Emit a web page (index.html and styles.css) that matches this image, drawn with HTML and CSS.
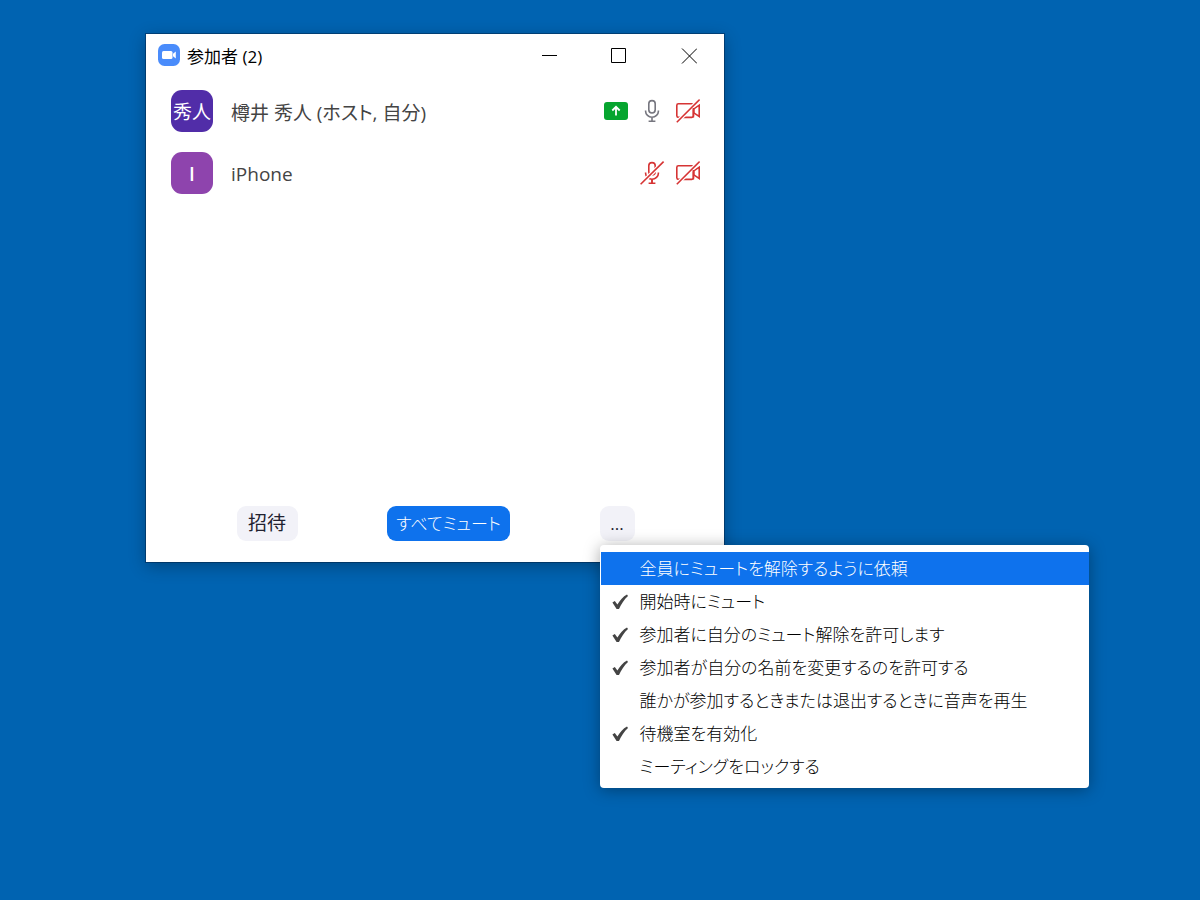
FILE: index.html
```html
<!DOCTYPE html>
<html lang="ja">
<head>
    <meta charset="UTF-8">
    <meta name="viewport" content="width=device-width, initial-scale=1.0">
    <title>参加者 (2)</title>
    <link rel="stylesheet" href="styles.css">
</head>
<body>
    <svg class="symbols" aria-hidden="true">
        <symbol id="mic" viewBox="0 0 24 24">
            <rect x="8.8" y="1.6" width="6.4" height="12.4" rx="3.2"/>
            <path d="M5.6 11.5v.7a6.4 6 0 0 0 12.8 0v-.7M12 18.2v4M8.6 22.3h6.8"/>
        </symbol>
        <symbol id="video-off" viewBox="0 0 24 24">
            <rect x=".8" y="4.8" width="16.6" height="13.6" rx="1.6"/>
            <path d="M17.8 9.8l5.4-3.6v11.2l-5.4-3.6z"/>
            <path class="slash-gap" d="M1 23L23.4 .8"/>
            <path d="M17.4 9v9.4"/>
            <path d="M.8 23.2L23.6 .6"/>
        </symbol>
        <symbol id="check" viewBox="0 0 18 18">
            <path d="M1.4 9.5L3.8 8l2.6 3.5C9 7.5 12 3.7 16 1.6l1 1.3C13 6.5 10.5 10.7 8 16H5.6z"/>
        </symbol>
    </svg>

    <main class="desktop">
        <section class="window">
            <header class="titlebar">
                <svg class="logo" viewBox="0 0 22 22" aria-hidden="true">
                    <rect width="22" height="22" rx="6.5" fill="#4a8cfb"/>
                    <rect x="4" y="7" width="10.5" height="8" rx="1.5" fill="#fff"/>
                    <path d="M15 9.8l2.8-2.3v7L15 12.2z" fill="#fff"/>
                </svg>
                <h1>参加者 (2)</h1>
                <div class="window-buttons">
                    <button type="button" aria-label="最小化">
                        <svg viewBox="0 0 16 16"><path d="M1 7.5h15"/></svg>
                    </button>
                    <button type="button" aria-label="最大化">
                        <svg viewBox="0 0 16 16"><path d="M.5 .5h14v14H.5z"/></svg>
                    </button>
                    <button type="button" aria-label="閉じる">
                        <svg viewBox="0 0 16 16"><path d="M1 .5l15 15M16 .5l-15 15"/></svg>
                    </button>
                </div>
            </header>

            <ul class="participants">
                <li>
                    <span class="avatar host">秀人</span>
                    <span class="name">樽井 秀人 (ホスト, 自分)</span>
                    <span class="status">
                        <svg viewBox="0 0 24 24" role="img" aria-label="画面共有中">
                            <rect y="3" width="24" height="18" rx="3" fill="#06a52f"/>
                            <path d="M12 16.5V8M8.3 11.5L12 7.8l3.7 3.7" fill="none" stroke="#fff" stroke-width="1.8"/>
                        </svg>
                        <svg class="icon" role="img" aria-label="マイク オン"><use href="#mic"/></svg>
                        <svg class="icon off" role="img" aria-label="ビデオ オフ"><use href="#video-off"/></svg>
                    </span>
                </li>
                <li>
                    <span class="avatar">I</span>
                    <span class="name">iPhone</span>
                    <span class="status">
                        <svg class="icon off" viewBox="0 0 24 24" role="img" aria-label="マイク オフ">
                            <use href="#mic"/>
                            <path class="slash-gap" d="M1 23L23.4 .8"/>
                            <path d="M.6 23.3L23.6 .6"/>
                            <path d="M12 18.2v4"/>
                        </svg>
                        <svg class="icon off" role="img" aria-label="ビデオ オフ"><use href="#video-off"/></svg>
                    </span>
                </li>
            </ul>

            <footer class="actions">
                <button type="button" class="btn invite">招待</button>
                <button type="button" class="btn primary">すべてミュート</button>
                <div class="more">
                    <button type="button" class="btn dots" aria-haspopup="menu" aria-expanded="true">...</button>
                    <div class="menu" role="menu">
                        <button type="button" role="menuitem" class="selected">全員にミュートを解除するように依頼</button>
                        <button type="button" role="menuitemcheckbox" aria-checked="true"><svg><use href="#check"/></svg>開始時にミュート</button>
                        <button type="button" role="menuitemcheckbox" aria-checked="true"><svg><use href="#check"/></svg>参加者に自分のミュート解除を許可します</button>
                        <button type="button" role="menuitemcheckbox" aria-checked="true"><svg><use href="#check"/></svg>参加者が自分の名前を変更するのを許可する</button>
                        <button type="button" role="menuitemcheckbox" aria-checked="false">誰かが参加するときまたは退出するときに音声を再生</button>
                        <button type="button" role="menuitemcheckbox" aria-checked="true"><svg><use href="#check"/></svg>待機室を有効化</button>
                        <button type="button" role="menuitemcheckbox" aria-checked="false">ミーティングをロックする</button>
                    </div>
                </div>
            </footer>
        </section>
    </main>
</body>
</html>
```
FILE: styles.css
```css
* {
    box-sizing: border-box;
}
body {
    margin: 0;
    background-color: #0063b1;
    font-family: "Open Sans", "Noto Sans CJK JP", sans-serif;
    font-size: 17px;
    font-weight: 400;
    font-feature-settings: "palt";
}
button {
    border: none;
    padding: 0;
    background: none;
    font: inherit;
    font-feature-settings: inherit;
    color: inherit;
    cursor: pointer;
}
.symbols {
    position: absolute;
    width: 0;
    height: 0;
}
.desktop {
    min-height: 100vh;
    padding: 34px 0 0 146px;
}
.window {
    display: flex;
    flex-direction: column;
    max-width: 578px;
    background-color: #fff;
    box-shadow: 0 0 0 1px rgba(0, 20, 50, 0.4), 0 4px 16px rgba(0, 0, 0, 0.3);
}

/* Title bar */
.titlebar {
    display: flex;
    align-items: center;
    height: 44px;
    padding-left: 12px;
}
.logo {
    width: 22px;
    height: 22px;
    margin: 0 7px 2px 0;
}
.titlebar h1 {
    margin: 0 0 2px;
    font-size: 17px;
    font-weight: inherit;
    color: #000;
}
.window-buttons {
    display: flex;
    margin-left: auto;
}
.window-buttons button {
    display: flex;
    align-items: center;
    justify-content: center;
    width: 70px;
    height: 44px;
}
.window-buttons svg {
    width: 16px;
    height: 16px;
    fill: none;
    stroke: #000;
}

/* Participant list */
.participants {
    min-height: 428px;
    margin: 0;
    padding: 2px 24px 0 25px;
    list-style: none;
}
.participants li {
    display: flex;
    align-items: center;
    height: 62px;
}
.avatar {
    width: 42px;
    height: 42px;
    margin-right: 18px;
    border-radius: 11px;
    background-color: #8e44ad;
    color: #fff;
    font-size: 19px;
    font-weight: 600;
    line-height: 44px;
    text-align: center;
}
.avatar.host {
    background-color: #512da8;
    font-weight: inherit;
}
.name {
    padding-top: 2px;
    font-size: 19px;
    color: #444;
}
.status {
    display: flex;
    gap: 12px;
    margin-left: auto;
}
.status svg {
    width: 24px;
    height: 24px;
    overflow: visible;
}
.icon {
    fill: none;
    stroke: #76767f;
    stroke-width: 1.6;
}
.icon.off {
    stroke: #d63434;
}
.slash-gap {
    stroke: #fff;
    stroke-width: 4;
}

/* Footer buttons */
.actions {
    display: flex;
    justify-content: space-evenly;
    padding: 0 0 21px 1px;
}
.btn {
    height: 35px;
    border-radius: 9px;
    background-color: #f2f2f8;
    color: #222230;
    font-size: 19px;
    line-height: 35px;
}
.btn.invite {
    min-width: 61px;
}
.btn.primary {
    min-width: 123px;
    background-color: #0e72ed;
    color: #fff;
    font-size: 17px;
    font-weight: 300;
}
.btn.dots {
    width: 35px;
    font-size: 17px;
}
.more {
    position: relative;
}

/* Drop-down menu */
.menu {
    position: absolute;
    top: calc(100% + 4px);
    left: 0;
    width: 489px;
    padding: 7px 0 5px 1px;
    border-radius: 4px;
    background-color: #fff;
    box-shadow: 0 2px 16px rgba(0, 0, 0, 0.35);
}
.menu button {
    position: relative;
    display: block;
    width: 100%;
    height: 33px;
    padding-left: 39px;
    color: #000;
    font-weight: 300;
    line-height: 34px;
    text-align: left;
    white-space: nowrap;
}
.menu button.selected {
    background-color: #0e72ed;
    color: #fff;
}
.menu svg {
    position: absolute;
    top: 8px;
    left: 10px;
    width: 18px;
    height: 18px;
    fill: #444;
}
```
